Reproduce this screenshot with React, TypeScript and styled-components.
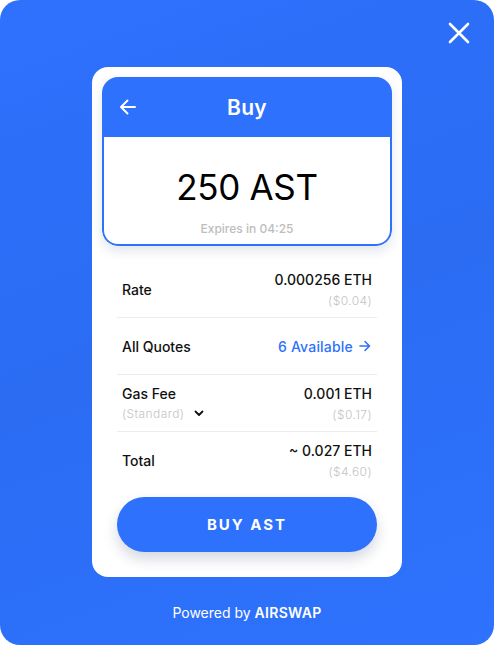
import React from "react";
import styled, { createGlobalStyle } from "styled-components";

const blue = "#2e71fc";

const GlobalStyle = createGlobalStyle`
  html, body {
    margin: 0;
    padding: 0;
    background: #ffffff;
  }
  body {
    font-family: Inter, "Noto Sans", "Liberation Sans", sans-serif;
    -webkit-font-smoothing: antialiased;
  }
`;

const rows = [
  { label: "Rate", value: "0.000256 ETH", usd: "($0.04)" },
  { label: "All Quotes", link: "6 Available" },
  { label: "Gas Fee", sub: "(Standard)", value: "0.001 ETH", usd: "($0.17)" },
  { label: "Total", value: "~ 0.027 ETH", usd: "($4.60)" },
];

function ArrowLeft() {
  return (
    <svg width="18" height="18" viewBox="0 0 18 18" fill="none">
      <path
        d="M16 9H2.5M8.5 2.5L2 9l6.5 6.5"
        stroke="#fff"
        strokeWidth="2"
        strokeLinecap="round"
        strokeLinejoin="round"
      />
    </svg>
  );
}

function ArrowRight() {
  return (
    <svg width="12" height="12" viewBox="0 0 12 12" fill="none">
      <path
        d="M1 6h9.5M6 1.5L10.5 6 6 10.5"
        stroke={blue}
        strokeWidth="1.6"
        strokeLinecap="round"
        strokeLinejoin="round"
      />
    </svg>
  );
}

function ChevronDown() {
  return (
    <svg width="10" height="7" viewBox="0 0 10 7" fill="none">
      <path
        d="M1.5 1.5L5 5l3.5-3.5"
        stroke="#111"
        strokeWidth="1.8"
        strokeLinecap="round"
        strokeLinejoin="round"
      />
    </svg>
  );
}

function CloseIcon() {
  return (
    <svg width="22" height="22" viewBox="0 0 22 22" fill="none">
      <path
        d="M2 2l18 18M20 2L2 20"
        stroke="#fff"
        strokeWidth="2.6"
        strokeLinecap="round"
      />
    </svg>
  );
}

export default function App() {
  return (
    <>
      <GlobalStyle />
      <Frame>
        <CloseButton aria-label="Close">
          <CloseIcon />
        </CloseButton>
        <Card>
          <Quote>
            <QuoteHeader>
              <BackButton aria-label="Back">
                <ArrowLeft />
              </BackButton>
              <Title>Buy</Title>
            </QuoteHeader>
            <QuoteBody>
              <Amount>250 AST</Amount>
              <Expires>Expires in 04:25</Expires>
            </QuoteBody>
          </Quote>
          <Details>
            {rows.map((r, i) => (
              <Row key={r.label} $last={i === rows.length - 1}>
                <LabelCol>
                  <Label>{r.label}</Label>
                  {r.sub && (
                    <SubRow>
                      <Muted>{r.sub}</Muted>
                      <ChevronDown />
                    </SubRow>
                  )}
                </LabelCol>
                {r.link ? (
                  <Link>
                    {r.link}
                    <ArrowRight />
                  </Link>
                ) : (
                  <ValueCol>
                    <Value>{r.value}</Value>
                    <Muted>{r.usd}</Muted>
                  </ValueCol>
                )}
              </Row>
            ))}
          </Details>
          <BuyButton>BUY AST</BuyButton>
        </Card>
        <Powered>
          Powered by <Brand>AIRSWAP</Brand>
        </Powered>
      </Frame>
    </>
  );
}

const Frame = styled.div`
  position: relative;
  box-sizing: border-box;
  width: 494px;
  height: 645px;
  border-radius: 20px;
  background: linear-gradient(160deg, #2f70fd 0%, #2b6cf3 50%, #2e72fd 100%);
  padding-top: 67px;
  display: flex;
  flex-direction: column;
  align-items: center;
`;

const CloseButton = styled.button`
  position: absolute;
  top: 22px;
  right: 24px;
  padding: 0;
  border: 0;
  background: none;
  display: flex;
  cursor: pointer;
`;

const Card = styled.div`
  box-sizing: border-box;
  width: 310px;
  height: 510px;
  background: #fff;
  border-radius: 16px;
  padding: 10px 10px 25px;
  display: flex;
  flex-direction: column;
`;

const Quote = styled.div`
  border-radius: 16px;
  overflow: hidden;
  box-shadow: 0 5px 12px rgba(20, 40, 90, 0.12);
`;

const QuoteHeader = styled.div`
  position: relative;
  height: 60px;
  background: ${blue};
  display: flex;
  align-items: center;
  justify-content: center;
`;

const BackButton = styled.button`
  position: absolute;
  left: 17px;
  top: 21px;
  padding: 0;
  border: 0;
  background: none;
  display: flex;
`;

const Title = styled.div`
  color: #fff;
  font-size: 21px;
  font-weight: 600;
  letter-spacing: 0.3px;
`;

const QuoteBody = styled.div`
  box-sizing: border-box;
  height: 109px;
  border: 2px solid ${blue};
  border-top: 0;
  border-radius: 0 0 16px 16px;
  display: flex;
  flex-direction: column;
  align-items: center;
  padding-top: 31px;
`;

const Amount = styled.div`
  font-size: 35px;
  font-weight: 400;
  color: #000;
  line-height: 38px;
  letter-spacing: -0.3px;
`;

const Expires = styled.div`
  margin-top: 15px;
  font-size: 12px;
  color: #bdbdbd;
  font-weight: 500;
`;

const Details = styled.div`
  margin-top: 15px;
  padding: 0 15px;
  display: flex;
  flex-direction: column;
`;

const Row = styled.div<{ $last?: boolean }>`
  height: ${(p) => (p.$last ? 56 : 57)}px;
  box-sizing: border-box;
  border-bottom: ${(p) => (p.$last ? "none" : "1px solid #ececec")};
  display: flex;
  align-items: center;
  justify-content: space-between;
`;

const LabelCol = styled.div`
  display: flex;
  flex-direction: column;
  gap: 4px;
`;

const Label = styled.div`
  font-size: 14px;
  font-weight: 500;
  color: #111;
  padding-left: 5px;
`;

const SubRow = styled.div`
  display: flex;
  align-items: center;
  gap: 10px;
  padding-left: 5px;
`;

const ValueCol = styled.div`
  display: flex;
  flex-direction: column;
  align-items: flex-end;
  gap: 5px;
  padding-right: 5px;
`;

const Value = styled.div`
  font-size: 14px;
  font-weight: 500;
  color: #111;
`;

const Muted = styled.div`
  font-size: 12px;
  font-weight: 300;
  color: #c4c4c4;
  letter-spacing: 0.4px;
`;

const Link = styled.div`
  display: flex;
  align-items: center;
  gap: 6px;
  color: ${blue};
  font-size: 14px;
  font-weight: 500;
  padding-right: 6px;
  letter-spacing: 0.2px;
`;

const BuyButton = styled.button`
  margin: 9px 15px 0;
  height: 55px;
  border: 0;
  border-radius: 28px;
  background: ${blue};
  color: #fff;
  font-family: inherit;
  font-size: 15px;
  font-weight: 700;
  letter-spacing: 2px;
  box-shadow: 0 7px 14px rgba(20, 40, 90, 0.18);
  cursor: pointer;
`;

const Powered = styled.div`
  margin-top: 27px;
  color: #fff;
  font-size: 14px;
  font-weight: 400;
`;

const Brand = styled.span`
  font-weight: 600;
  letter-spacing: 0.3px;
`;
